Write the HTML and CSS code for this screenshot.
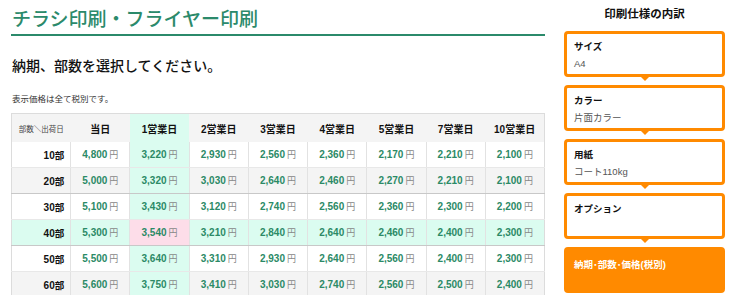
FILE: index.html
```html
<!DOCTYPE html>
<html lang="ja">
<head>
    <meta charset="UTF-8">
    <title>チラシ印刷・フライヤー印刷</title>
    <link rel="stylesheet" href="styles.css">
</head>
<body>
<div class="page">
    <div class="main">
        <h1 class="title">チラシ印刷・フライヤー印刷</h1>
        <h2 class="lead">納期、部数を選択してください。</h2>
        <p class="note">表示価格は全て税別です。</p>

        <table class="price-table" id="priceTable">
            <thead>
                <tr>
                    <th class="corner">部数＼出荷日</th>
                    <th>当日</th>
                    <th class="sel-col">1営業日</th>
                    <th>2営業日</th>
                    <th>3営業日</th>
                    <th>4営業日</th>
                    <th>5営業日</th>
                    <th>7営業日</th>
                    <th>10営業日</th>
                </tr>
            </thead>
            <tbody>
                <!-- JSで描画 -->
            </tbody>
        </table>
    </div>

    <div class="side">
        <div class="side-title">印刷仕様の内訳</div>
        <div class="spec-box">
            <div class="spec-label">サイズ</div>
            <div class="spec-value">A4</div>
        </div>
        <div class="spec-box">
            <div class="spec-label">カラー</div>
            <div class="spec-value">片面カラー</div>
        </div>
        <div class="spec-box">
            <div class="spec-label">用紙</div>
            <div class="spec-value">コート110kg</div>
        </div>
        <div class="spec-box">
            <div class="spec-label">オプション</div>
            <div class="spec-value"></div>
        </div>
        <div class="spec-box spec-total">
            <div class="spec-label">納期･部数･価格(税別)</div>
        </div>
    </div>
</div>

<script>
    // 部数ごとの価格 (当日, 1, 2, 3, 4, 5, 7, 10営業日)
    const priceList = [
        {qty: 10, prices: [4800, 3220, 2930, 2560, 2360, 2170, 2210, 2100]},
        {qty: 20, prices: [5000, 3320, 3030, 2640, 2460, 2270, 2210, 2100]},
        {qty: 30, prices: [5100, 3430, 3120, 2740, 2560, 2360, 2300, 2200]},
        {qty: 40, prices: [5300, 3540, 3210, 2840, 2640, 2460, 2400, 2300]},
        {qty: 50, prices: [5500, 3640, 3310, 2930, 2640, 2560, 2400, 2300]},
        {qty: 60, prices: [5600, 3750, 3410, 3030, 2740, 2560, 2500, 2400]}
    ];
    const selQty = 40, selCol = 1;

    function renderTable() {
        let tbody = document.querySelector("#priceTable tbody");
        tbody.innerHTML = "";
        priceList.forEach(row => {
            let cells = row.prices.map((p, i) => {
                let cls = "";
                if (i == selCol) cls = row.qty == selQty ? "picked" : "sel-col";
                return `<td class="${cls}"><span class="yen-num">${p.toLocaleString()}</span><span class="yen">円</span></td>`;
            }).join("");
            tbody.innerHTML += `<tr class="${row.qty == selQty ? "sel-row" : ""}">
                <td class="qty">${row.qty}<span class="bu">部</span></td>${cells}
            </tr>`;
        });
    }

    renderTable();
</script>
</body>
</html>
```

FILE: styles.css
```css
body { margin: 0; font-family: "Liberation Sans", "Noto Sans CJK JP", sans-serif; color: #222; background: #fff; }
.page { display: flex; gap: 19px; padding: 0 12px 0 11px; }
.main { width: 534px; }
.side { width: 161px; }

.title { margin: 0; padding: 4px 0 2px 1px; font-family: "Noto Sans CJK JP", sans-serif; font-size: 19px; line-height: 28px; font-weight: 500; color: #2b8a6b; border-bottom: 2px solid #2b8a6b; }
.lead { margin: 18px 0 0 1px; font-family: "Noto Sans CJK JP", sans-serif; font-size: 14px; line-height: 22px; font-weight: 500; color: #111; }
.note { margin: 17px 0 0 1px; font-size: 8.5px; line-height: 12px; color: #333; }

.price-table { width: 100%; margin-top: 8px; border-collapse: collapse; table-layout: fixed; border: 1px solid #dcdcdc; }
.price-table th { height: 28px; background: #f4f4f4; font-size: 10px; font-weight: bold; color: #111; text-align: center; padding: 0; }
.price-table th.corner { font-size: 7.5px; font-weight: normal; color: #444; }
.price-table td { height: 25px; padding: 0; border-left: 1px solid #e2e2e2; border-bottom: 1px solid #e8e8e8; text-align: center; font-size: 10px; }
.price-table tbody tr:nth-child(even) td { border-bottom-color: #c8c8c8; }
.price-table tbody tr:nth-child(even) { background: #f4f4f4; }
.price-table tbody tr.sel-row { background: #dbfcf0; }
.price-table td.qty { text-align: right; padding-right: 6px; font-weight: bold; color: #111; border-left: none; }
.price-table td.qty .bu { font-size: 9.5px; }
.price-table .sel-col { background: #dbfcf0; }
.price-table td.picked { background: #fddde9; }
.yen-num { font-weight: bold; color: #2b8a66; }
.yen { margin-left: 2px; font-size: 9px; color: #888; }

.side-title { text-align: center; font-size: 11.5px; font-weight: bold; line-height: 16px; padding-top: 6px; margin-bottom: 9px; color: #111; }
.spec-box { position: relative; height: 40px; margin-bottom: 8px; padding: 0 7px; border: 3px solid #ff8a00; border-radius: 4px; background: #fff; }
.spec-box::after { content: ""; position: absolute; left: 50%; bottom: -7px; margin-left: -5px; border-left: 5px solid transparent; border-right: 5px solid transparent; border-top: 5px solid #ff8a00; }
.spec-label { padding-top: 7px; font-size: 9.5px; font-weight: bold; line-height: 12px; color: #111; }
.spec-value { margin-top: 5px; font-size: 9.5px; line-height: 12px; color: #555; }
.spec-total { background: #ff8a00; border-color: #ff8a00; }
.spec-total::after { display: none; }
.spec-total .spec-label { padding-top: 9px; color: #fff; }
```
